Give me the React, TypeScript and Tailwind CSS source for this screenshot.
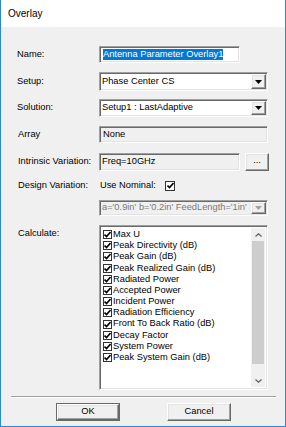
import React from "react";

const sunken =
  "border-t border-l border-b border-r border-t-[#a0a0a0] border-l-[#a0a0a0] border-b-white border-r-white shadow-[inset_1px_1px_0_#696969,inset_-1px_-1px_0_#e3e3e3]";
const raised =
  "border-t border-l border-b border-r border-t-white border-l-white border-b-[#696969] border-r-[#696969] shadow-[inset_-1px_-1px_0_#a0a0a0,inset_1px_1px_0_#e3e3e3]";

function Arrow({ disabled }: { disabled?: boolean }) {
  return (
    <svg width="7" height="4" viewBox="0 0 7 4">
      <path d="M0 0H7L3.5 4Z" fill={disabled ? "#a0a0a0" : "#000"} />
    </svg>
  );
}

function Combo({ text, disabled, h }: { text: string; disabled?: boolean; h: string }) {
  return (
    <div className={`${h} w-[169px] ${sunken} ${disabled ? "bg-[#f0f0f0]" : "bg-white"} flex items-center`}>
      <div className={`flex-1 pl-[2px] overflow-hidden whitespace-nowrap ${disabled ? "text-[#7a7a7a]" : "text-black"}`}>{text}</div>
      <div className={`w-[15px] self-stretch m-[1px] ${raised} bg-[#f0f0f0] flex items-center justify-center`}>
        <Arrow disabled={disabled} />
      </div>
    </div>
  );
}

function Check({ size = "w-[9px] h-[9px]" }: { size?: string }) {
  return (
    <div className={`${size} bg-white border border-[#333] flex items-center justify-center shrink-0`}>
      <svg width="7" height="7" viewBox="0 0 7 7">
        <path d="M0.5 3.5L2.5 5.5L6.5 1" stroke="#000" strokeWidth="1.6" fill="none" />
      </svg>
    </div>
  );
}

const items = [
  "Max U",
  "Peak Directivity (dB)",
  "Peak Gain (dB)",
  "Peak Realized Gain (dB)",
  "Radiated Power",
  "Accepted Power",
  "Incident Power",
  "Radiation Efficiency",
  "Front To Back Ratio (dB)",
  "Decay Factor",
  "System Power",
  "Peak System Gain (dB)",
];

export default function App() {
  return (
    <div
      className="w-[286px] h-[427px] flex flex-col bg-white border-x border-b border-[#2b88d8] text-[9.3px] text-black leading-none"
      style={{ fontFamily: '"Liberation Sans", Arial, sans-serif' }}
    >
      <div className="h-[27px] shrink-0 pl-[7px] flex items-center text-[10px] bg-white">Overlay</div>
      <div className="flex-1 bg-[#f0f0f0] flex flex-col pl-[16px]">
        {/* Name */}
        <div className="mt-[19px] h-[17px] flex items-center">
          <div className="w-[82px]">Name:</div>
          <div className={`h-[17px] w-[141px] bg-white ${sunken} flex items-center pl-[3px]`}>
            <span className="bg-[#0078d7] text-white h-[11px] flex items-center">Antenna Parameter Overlay1</span>
          </div>
        </div>
        {/* Setup */}
        <div className="mt-[9px] flex items-center">
          <div className="w-[82px]">Setup:</div>
          <Combo text="Phase Center CS" h="h-[19px]" />
        </div>
        {/* Solution */}
        <div className="mt-[8px] flex items-center">
          <div className="w-[82px]">Solution:</div>
          <Combo text="Setup1 : LastAdaptive" h="h-[18px]" />
        </div>
        {/* Array */}
        <div className="mt-[9px] flex items-center">
          <div className="w-[82px] pl-[1px]">Array</div>
          <div className={`h-[17px] w-[169px] bg-[#f0f0f0] ${sunken} flex items-center pl-[3px]`}>None</div>
        </div>
        {/* Intrinsic */}
        <div className="mt-[10px] flex items-center">
          <div className="w-[82px] pl-[1px]">Intrinsic Variation:</div>
          <div className={`h-[18px] w-[141px] bg-[#f0f0f0] ${sunken} flex items-center pl-[2px]`}>Freq=10GHz</div>
          <div className={`ml-[5px] h-[18px] w-[24px] bg-[#f0f0f0] ${raised} flex items-center justify-center pb-[2px]`}>...</div>
        </div>
        {/* Design variation */}
        <div className="mt-[9px] h-[11px] flex items-center">
          <div className="w-[82px] pl-[1px]">Design Variation:</div>
          <div className="w-[66px] pl-[1px]">Use Nominal:</div>
          <Check size="w-[10px] h-[10px]" />
        </div>
        {/* Variation combo */}
        <div className="mt-[9px] flex items-center">
          <div className="w-[82px]"></div>
          <Combo text="a='0.9in' b='0.2in' FeedLength='1in' l" h="h-[16px]" disabled />
        </div>
        {/* Calculate */}
        <div className="mt-[9px] flex items-start">
          <div className="w-[82px] pl-[1px] pt-[1px] h-[9px] mt-[3px]">Calculate:</div>
          <div className={`h-[165px] w-[169px] bg-white ${sunken} flex p-[2px]`}>
            <div className="flex-1 flex flex-col pt-[1px]">
              {items.map((t) => (
                <div key={t} className="h-[11.2px] flex items-center gap-[1px] pl-[1px] whitespace-nowrap">
                  <Check />
                  <span>{t}</span>
                </div>
              ))}
            </div>
            <div className="w-[14px] bg-[#f0f0f0] flex flex-col">
              <div className="h-[13px] flex items-center justify-center">
                <svg width="7" height="4" viewBox="0 0 7 4">
                  <path d="M0.5 3.5L3.5 0.8L6.5 3.5" stroke="#606060" strokeWidth="1.2" fill="none" />
                </svg>
              </div>
              <div className="h-[123px] mx-[1px] bg-[#cdcdcd]"></div>
              <div className="flex-1"></div>
              <div className="h-[13px] flex items-center justify-center">
                <svg width="7" height="4" viewBox="0 0 7 4">
                  <path d="M0.5 0.5L3.5 3.2L6.5 0.5" stroke="#606060" strokeWidth="1.2" fill="none" />
                </svg>
              </div>
            </div>
          </div>
        </div>
        {/* separator */}
        <div className="mt-[6px] mr-[9px] -ml-[6px] h-[2px] border-t border-t-[#a0a0a0] border-b border-b-white"></div>
        {/* buttons */}
        <div className="mt-[5px] flex">
          <div className="ml-[39px] h-[18px] w-[64px] border border-[#696969] bg-[#f0f0f0]">
            <div className={`h-full w-full ${raised} flex items-center justify-center`}>OK</div>
          </div>
          <div className={`ml-[47px] h-[18px] w-[64px] bg-[#f0f0f0] ${raised} flex items-center justify-center`}>Cancel</div>
        </div>
      </div>
    </div>
  );
}
